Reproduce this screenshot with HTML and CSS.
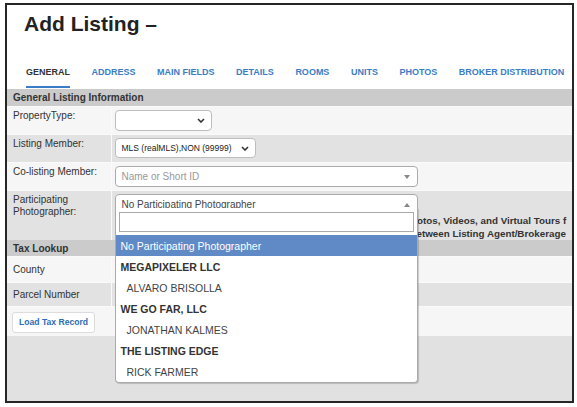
FILE: index.html
```html
<!DOCTYPE html>
<html lang="en">

<head>
    <meta charset="UTF-8">
    <title>Add Listing</title>
    <meta name="viewport" content="width=device-width, initial-scale=1.0">
    <link rel="stylesheet" href="styles.css">
</head>

<body>
    <div class="window">
        <header class="page-head">
            <h1>Add Listing –</h1>
            <nav class="tabs">
                <a class="tab active">GENERAL</a>
                <a class="tab">ADDRESS</a>
                <a class="tab">MAIN FIELDS</a>
                <a class="tab">DETAILS</a>
                <a class="tab">ROOMS</a>
                <a class="tab">UNITS</a>
                <a class="tab">PHOTOS</a>
                <a class="tab">BROKER DISTRIBUTION</a>
            </nav>
        </header>

        <main class="content">
            <table class="form">
                <colgroup>
                    <col class="col-label">
                    <col>
                </colgroup>

                <!-- General -->
                <tr class="section">
                    <th colspan="2">General Listing Information</th>
                </tr>
                <tr class="light">
                    <td class="label">PropertyType:</td>
                    <td class="field pad-a">
                        <div class="select select-type">
                            <span></span>
                            <svg width="8" height="5" viewBox="0 0 8 5"><path d="M1 1l3 3 3-3" fill="none" stroke="#333" stroke-width="1.6"/></svg>
                        </div>
                    </td>
                </tr>
                <tr class="dark">
                    <td class="label">Listing Member:</td>
                    <td class="field pad-b">
                        <div class="select select-member">
                            <span>MLS (realMLS),NON (99999)</span>
                            <svg width="8" height="5" viewBox="0 0 8 5"><path d="M1 1l3 3 3-3" fill="none" stroke="#333" stroke-width="1.6"/></svg>
                        </div>
                    </td>
                </tr>
                <tr class="light">
                    <td class="label">Co-listing Member:</td>
                    <td class="field pad-c">
                        <div class="s2">
                            <div class="s2-selection">
                                <span class="placeholder">Name or Short ID</span>
                                <b class="arrow-down"></b>
                            </div>
                        </div>
                    </td>
                </tr>
                <tr class="dark">
                    <td class="label">Participating<br>Photographer:</td>
                    <td class="field pad-d">
                        <div class="s2 open">
                            <div class="s2-selection">
                                <span>No Participating Photographer</span>
                                <b class="arrow-up"></b>
                            </div>
                            <div class="s2-dropdown">
                                <div class="s2-search"><input type="text"></div>
                                <ul class="s2-results">
                                    <li class="opt highlighted">No Participating Photographer</li>
                                    <li class="group">MEGAPIXELER LLC</li>
                                    <li class="opt child">ALVARO BRISOLLA</li>
                                    <li class="group">WE GO FAR, LLC</li>
                                    <li class="opt child">JONATHAN KALMES</li>
                                    <li class="group">THE LISTING EDGE</li>
                                    <li class="opt child">RICK FARMER</li>
                                </ul>
                            </div>
                        </div>
                        <div class="note">
                            <span>Photos, Videos, and Virtual Tours f</span>
                            <span class="note-2">between Listing Agent/Brokerage</span>
                        </div>
                    </td>
                </tr>

                <!-- Tax -->
                <tr class="section section-tax">
                    <th colspan="2">Tax Lookup</th>
                </tr>
                <tr class="light">
                    <td class="label label-county">County</td>
                    <td class="field"></td>
                </tr>
                <tr class="dark">
                    <td class="label label-parcel">Parcel Number</td>
                    <td class="field"></td>
                </tr>
                <tr class="light">
                    <td class="load-cell" colspan="2">
                        <button class="btn-load">Load Tax Record</button>
                    </td>
                </tr>
            </table>
        </main>
    </div>
</body>

</html>
```

FILE: styles.css
```css
/* Reset */

* {
    padding: 0;
    margin: 0;
    box-sizing: border-box;
}

body {
    font-family: "Liberation Sans", Arial, Helvetica, sans-serif;
    background-color: #fff;
    color: #333;
}

/* Frame */

.window {
    width: 569px;
    height: 400px;
    margin: 3px 0 0 5px;
    border: 2px solid #262626;
    background-color: #fff;
    display: flex;
    flex-direction: column;
    overflow: hidden;
}

/* Title + tabs */

.page-head {
    padding: 7px 0 0 17px;
}

h1 {
    font-size: 21px;
    line-height: 24px;
    font-weight: bold;
    color: #222;
}

.tabs {
    display: flex;
    gap: 21.5px;
    margin-top: 22px;
    margin-bottom: 1px;
    padding-left: 2px;
}

.tab {
    font-size: 9px;
    line-height: 11px;
    font-weight: bold;
    color: #3a7dc6;
    padding: 9px 0 8px;
    border-bottom: 2px solid transparent;
    white-space: nowrap;
}

.tab.active {
    color: #333;
    border-bottom-color: #3a7dc6;
}

/* Form table */

.content {
    flex: 1 1 auto;
    background-color: #e0e1e0;
}

.form {
    width: 100%;
    border-collapse: collapse;
    table-layout: fixed;
}

.col-label {
    width: 104px;
}

.form tr {
    border-top: 1px solid #f9faf9;
}

.form tr.section {
    border-top: none;
}

.light {
    background-color: #f5f6f5;
}

.dark {
    background-color: #e1e2e1;
}

.section th {
    background-color: #cbcbcb;
    text-align: left;
    font-size: 10px;
    line-height: 12px;
    font-weight: bold;
    color: #333;
    padding: 3px 6px 2px;
}

.section-tax th {
    line-height: 11px;
    padding: 3px 6px 2px;
}

.label {
    font-size: 10px;
    line-height: 12px;
    color: #333;
    vertical-align: top;
    padding: 3px 6px;
}

.label-county {
    padding: 7px 6px 6px;
}

.label-parcel {
    padding: 6px 6px 5px;
}

.field {
    border-left: 1px solid #f9faf9;
    vertical-align: top;
    padding-left: 3px;
}

.pad-a { padding-top: 3px; padding-bottom: 3px; }
.pad-b { padding-top: 3px; padding-bottom: 4px; }
.pad-c { padding-top: 3px; padding-bottom: 3px; }
.pad-d { padding-top: 3px; padding-bottom: 0; }

/* Native-looking selects */

.select {
    display: flex;
    align-items: center;
    justify-content: space-between;
    background-color: #fff;
    border: 1px solid #bdbdbd;
    border-radius: 4px;
    padding: 0 6px 0 6px;
}

.select-type {
    width: 97px;
    height: 21px;
}

.select-member {
    width: 141px;
    height: 20px;
    font-size: 8.5px;
    color: #222;
}

/* Select2 style boxes */

.s2 {
    position: relative;
    width: 303px;
}

.s2-selection {
    height: 21px;
    display: flex;
    align-items: center;
    justify-content: space-between;
    background-color: #fff;
    border: 1px solid #aaa;
    border-radius: 4px;
    padding: 0 6px 0 6px;
    font-size: 10px;
    color: #444;
}

.s2.open .s2-selection {
    border-radius: 4px 4px 0 0;
    align-items: flex-start;
    padding-top: 4px;
}

.placeholder {
    color: #999;
}

.arrow-down,
.arrow-up {
    width: 0;
    height: 0;
    border-style: solid;
    margin-right: 1px;
}

.arrow-down {
    border-width: 4px 3px 0;
    border-color: #888 transparent transparent;
}

.arrow-up {
    border-width: 0 3px 4px;
    border-color: transparent transparent #888;
    margin-top: 4px;
}

/* Open dropdown, sits over the rows below */

.s2-dropdown {
    position: absolute;
    top: 14px;
    left: 0;
    width: 100%;
    z-index: 2;
    background-color: #fff;
    border: 1px solid #aaa;
    border-top: none;
    border-radius: 0 0 4px 4px;
    box-shadow: 1px 1px 1px rgba(0, 0, 0, 0.18);
}

.s2-search {
    padding: 4px 3px 3px;
}

.s2-search input {
    display: block;
    width: 100%;
    height: 20px;
    border: 1px solid #aaa;
    outline: none;
}

.s2-results {
    list-style: none;
}

.s2-results li {
    height: 21px;
    line-height: 22px;
    font-size: 10.5px;
    padding-left: 5px;
    white-space: nowrap;
}

.opt {
    color: #444;
}

.group {
    font-weight: bold;
    color: #333;
}

.child {
    padding-left: 11px !important;
}

.highlighted {
    background-color: #5f8ac6;
    color: #fff;
}

/* Note partly hidden by the dropdown */

.note {
    margin: -1px 0 0 290px;
    font-size: 9.8px;
    line-height: 13px;
    font-weight: bold;
    color: #333;
    white-space: nowrap;
}

.note span {
    display: block;
}

.note-2 {
    padding-left: 6px;
}

/* Tax lookup button */

.load-cell {
    padding: 4px 3px 3px 5px;
}

.btn-load {
    height: 21px;
    padding: 0 6px;
    background-color: #fff;
    border: 1px solid #dcdcdc;
    border-radius: 3px;
    font-family: "Liberation Sans", Arial, sans-serif;
    font-size: 8.6px;
    font-weight: bold;
    color: #2c6db5;
}
```
